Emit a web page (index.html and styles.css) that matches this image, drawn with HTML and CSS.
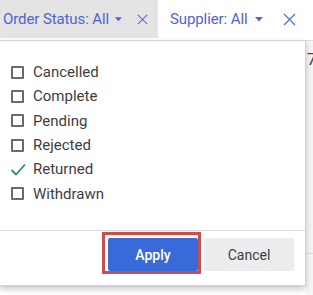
FILE: index.html
```html
<!DOCTYPE html>
<html>
<head>
<meta charset="utf-8">
<link rel="stylesheet" href="styles.css">
</head>
<body>
<div class="toolbar">
  <div class="chip chip-active">
    <span class="chip-label">Order Status: All</span>
    <svg class="caret" width="8" height="5" viewBox="0 0 8 5"><path d="M0 0 H8 L4 4.5 Z" fill="currentColor"/></svg>
    <svg class="close" width="13" height="13" viewBox="0 0 13 13"><path d="M1 1 L12 12 M12 1 L1 12" stroke="currentColor" stroke-width="1.3" fill="none"/></svg>
  </div>
  <div class="chip chip-second">
    <span class="chip-label">Supplier: All</span>
    <svg class="caret" width="8" height="5" viewBox="0 0 8 5"><path d="M0 0 H8 L4 4.5 Z" fill="currentColor"/></svg>
    <svg class="close" width="13" height="13" viewBox="0 0 13 13"><path d="M1 1 L12 12 M12 1 L1 12" stroke="currentColor" stroke-width="1.3" fill="none"/></svg>
  </div>
</div>
<div class="page">
  <div class="behind">
    <span class="cell">7</span>
    <div class="rowline"></div>
  </div>
  <div class="dropdown">
    <ul class="options">
      <li class="option"><span class="box"></span><span class="label">Cancelled</span></li>
      <li class="option"><span class="box"></span><span class="label">Complete</span></li>
      <li class="option"><span class="box"></span><span class="label">Pending</span></li>
      <li class="option"><span class="box"></span><span class="label">Rejected</span></li>
      <li class="option checked"><svg class="check" width="16" height="13" viewBox="0 0 16 13"><path d="M1.5 7 L6 11.5 L15 1.5" stroke="currentColor" stroke-width="1.8" fill="none"/></svg><span class="label">Returned</span></li>
      <li class="option"><span class="box"></span><span class="label">Withdrawn</span></li>
    </ul>
    <div class="footer">
      <span class="highlight"><button class="btn btn-primary">Apply</button></span>
      <button class="btn btn-secondary">Cancel</button>
    </div>
  </div>
</div>
</body>
</html>
```

FILE: styles.css
```css
* { box-sizing: border-box; }
html, body { margin: 0; padding: 0; }
body {
  width: 313px;
  height: 295px;
  overflow: hidden;
  background: #fff;
  font-family: Roboto, "Liberation Sans", sans-serif;
}
.toolbar {
  display: flex;
  height: 38px;
  background: #fff;
}
.chip {
  display: flex;
  align-items: center;
  height: 38px;
  padding: 0 10px 0 12px;
  color: #4f63d2;
  font-size: 15px;
}
.chip-active {
  width: 158px;
  padding-left: 3px;
  background: #e4e4e4;
}
.chip-label { white-space: nowrap; letter-spacing: -0.1px; }
.caret { margin-left: 6px; margin-top: 1px; }
.close { margin-left: 15px; color: #5b6fd8; }
.chip-second .caret { margin-left: 7px; }
.chip-second .close { margin-left: 20px; }
.page {
  position: relative;
  height: 257px;
  background: #fff;
}
.behind {
  position: absolute;
  left: 306px;
  top: 2px;
  right: 0;
  bottom: 0;
  background: #f5f5f5;
  border-top: 1px solid #ddd;
}
.cell {
  position: absolute;
  left: 1px;
  top: 8px;
  font-size: 17px;
  color: #444;
}
.rowline {
  position: absolute;
  left: 0;
  right: 0;
  top: 212px;
  height: 1px;
  background: #ddd;
}
.dropdown {
  position: absolute;
  left: -1px;
  top: 2px;
  width: 307px;
  height: 246px;
  background: #fff;
  border: 1px solid #d2d2d2;
  box-shadow: 0 3px 6px rgba(0,0,0,0.22);
}
.options {
  list-style: none;
  margin: 0;
  padding: 19px 0 0 0;
  height: 190px;
  border-bottom: 1px solid #dcdcdc;
}
.option {
  display: flex;
  align-items: center;
  height: 24.3px;
  padding-left: 11px;
  font-size: 15px;
  color: #3e3e3e;
}
.box {
  width: 13px;
  height: 13px;
  border: 2px solid #6b6b6b;
  border-radius: 1px;
  flex: none;
}
.check {
  color: #2a8c6c;
  margin-left: -1px;
  margin-right: -2px;
  flex: none;
}
.label { margin-left: 9px; }
.footer {
  display: flex;
  align-items: flex-start;
  justify-content: flex-end;
  padding: 1px 11px 0 0;
}
.highlight {
  display: block;
  border: 3px solid #c8504c;
  padding: 3px 0 0 3px;
}
.btn {
  display: block;
  width: 90px;
  height: 33px;
  border: none;
  border-radius: 2px;
  font-family: Roboto, "Liberation Sans", sans-serif;
  font-size: 14px;
  padding: 0;
}
.btn-primary {
  background: #3a69d9;
  color: #fff;
  font-weight: 500;
}
.btn-secondary {
  margin-left: 3px;
  margin-top: 6px;
  background: #ededf0;
  color: #3e3e3e;
}
```
